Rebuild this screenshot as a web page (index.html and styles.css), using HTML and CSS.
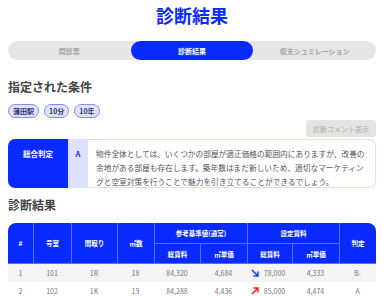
FILE: index.html
```html
<!DOCTYPE html>
<html lang="ja">
<head>
    <meta charset="UTF-8">
    <meta name="viewport" content="width=device-width, initial-scale=1.0">
    <title>診断結果</title>
    <link rel="stylesheet" href="styles.css">
</head>
<body>
    <div class="page">
        <h1 class="page-title">診断結果</h1>

        <div class="tabs">
            <div class="tab">問診票</div>
            <div class="tab active">診断結果</div>
            <div class="tab">収支シュミレーション</div>
        </div>

        <h2 class="section-title">指定された条件</h2>
        <div class="tags">
            <span class="tag">蒲田駅</span>
            <span class="tag">10分</span>
            <span class="tag">10年</span>
        </div>

        <div class="comment-bar">
            <button class="comment-btn">診断コメント表示</button>
        </div>

        <div class="verdict">
            <div class="verdict-label">総合判定</div>
            <div class="verdict-grade">A</div>
            <div class="verdict-text">物件全体としては、いくつかの部屋が適正価格の範囲内にありますが、改善の余地がある部屋も存在します。築年数はまだ新しいため、適切なマーケティングと空室対策を行うことで魅力を引き立てることができるでしょう。</div>
        </div>

        <h2 class="section-title result-title">診断結果</h2>
        <table class="result-table">
            <colgroup>
                <col style="width:25px">
                <col style="width:38px">
                <col style="width:46px">
                <col style="width:37px">
                <col style="width:46px">
                <col style="width:47px">
                <col style="width:45px">
                <col style="width:47px">
                <col style="width:37px">
            </colgroup>
            <thead>
                <tr class="head-top">
                    <th rowspan="2">#</th>
                    <th rowspan="2">号室</th>
                    <th rowspan="2">間取り</th>
                    <th rowspan="2">㎡数</th>
                    <th colspan="2">参考基準値(通常)</th>
                    <th colspan="2">設定賃料</th>
                    <th rowspan="2">判定</th>
                </tr>
                <tr class="head-sub">
                    <th>総賃料</th>
                    <th>㎡単価</th>
                    <th>総賃料</th>
                    <th>㎡単価</th>
                </tr>
            </thead>
            <tbody>
                <tr>
                    <td>1</td>
                    <td>101</td>
                    <td>1R</td>
                    <td>18</td>
                    <td>84,320</td>
                    <td>4,684</td>
                    <td class="rent">
                        <svg class="arrow down" viewBox="0 0 8 8"><path d="M1 1 L7 7 M2.5 7 H7 V2.5"/></svg>
                        <span>78,000</span>
                    </td>
                    <td>4,333</td>
                    <td>B-</td>
                </tr>
                <tr>
                    <td>2</td>
                    <td>102</td>
                    <td>1K</td>
                    <td>19</td>
                    <td>84,288</td>
                    <td>4,436</td>
                    <td class="rent">
                        <svg class="arrow up" viewBox="0 0 8 8"><path d="M1 7 L7 1 M2.5 1 H7 V5.5"/></svg>
                        <span>85,000</span>
                    </td>
                    <td>4,474</td>
                    <td>A</td>
                </tr>
            </tbody>
        </table>
    </div>
</body>
</html>
```

FILE: styles.css
```css
body {
    margin: 0;
    font-family: "Noto Sans CJK JP", "Noto Sans", sans-serif;
    color: #444;
    background: #fff;
}
.page {
    padding: 0 12px 0 8px;
}
.page-title {
    margin: 0;
    padding-top: 4px;
    height: 37px;
    text-align: center;
    font-size: 18px;
    line-height: 22px;
    font-weight: bold;
    color: #0a2bff;
}
.tabs {
    display: flex;
    height: 19px;
    background: #e6e6e6;
    border-radius: 10px;
}
.tab {
    flex: 1;
    display: flex;
    align-items: center;
    justify-content: center;
    font-size: 7px;
    font-weight: bold;
    color: #a3a3a3;
    border-radius: 10px;
}
.tab.active {
    background: #0a2bff;
    color: #fff;
}
.section-title {
    margin: 0;
    font-size: 12px;
    line-height: 16px;
    font-weight: bold;
    color: #444;
}
.tabs + .section-title {
    margin-top: 19px;
}
.tags {
    display: flex;
    gap: 5px;
    margin-top: 9px;
}
.tag {
    display: inline-flex;
    align-items: center;
    height: 12px;
    padding: 0 4px;
    font-size: 7px;
    font-weight: bold;
    color: #2f3570;
    background: #dfe3ff;
    border: 1px solid #7d8ffb;
    border-radius: 8px;
}
.comment-bar {
    display: flex;
    justify-content: flex-end;
    margin-top: 2px;
}
.comment-btn {
    height: 17px;
    width: 70px;
    padding: 0;
    font-family: inherit;
    font-size: 7px;
    color: #aaa;
    background: #e4e4e4;
    border: none;
    border-radius: 3px;
}
.verdict {
    display: flex;
    margin-top: 2px;
    height: 49px;
}
.verdict-label {
    width: 60px;
    flex-shrink: 0;
    padding-top: 9px;
    text-align: center;
    font-size: 7.5px;
    font-weight: bold;
    color: #fff;
    background: #0a2bff;
    border-radius: 7px 0 0 7px;
    box-sizing: border-box;
}
.verdict-grade {
    width: 20px;
    flex-shrink: 0;
    padding-top: 9px;
    text-align: center;
    font-size: 7.5px;
    font-weight: bold;
    color: #0a2bff;
    background: #dde1ff;
    box-sizing: border-box;
}
.verdict-text {
    flex: 1;
    padding: 7px 8px 0 8px;
    font-size: 7.7px;
    line-height: 14px;
    color: #555;
    border: 1px solid #d9dffd;
    border-left: none;
    border-radius: 0 7px 7px 0;
}
.result-title {
    margin-top: 9px;
}
.result-table {
    margin-top: 10px;
    width: 368px;
    table-layout: fixed;
    border-collapse: separate;
    border-spacing: 0;
    font-size: 6.5px;
}
.result-table th {
    background: #0a2bff;
    color: #fff;
    font-weight: bold;
    text-align: center;
    border-left: 1px solid #5470ff;
    border-bottom: 1px solid #5470ff;
    padding: 0;
}
.result-table th:first-child {
    border-left: none;
}
.head-sub th:first-child {
    border-left: 1px solid #5470ff;
}
.head-top th {
    height: 20px;
}
.head-top th:first-child {
    border-top-left-radius: 8px;
}
.head-top th:last-child {
    border-top-right-radius: 8px;
}
.head-sub th {
    height: 19px;
}
.result-table td {
    height: 18px;
    padding: 0;
    text-align: center;
    color: #777;
    font-size: 7px;
}
.result-table tbody tr:nth-child(odd) td {
    background: #f4f4f4;
}
.rent {
    position: relative;
}
.rent span {
    padding-left: 10px;
}
.arrow {
    position: absolute;
    left: 4px;
    top: 5px;
    width: 8px;
    height: 8px;
    fill: none;
    stroke-width: 1.5;
}
.arrow.down {
    stroke: #1a3cff;
}
.arrow.up {
    stroke: #e8232a;
}
```
